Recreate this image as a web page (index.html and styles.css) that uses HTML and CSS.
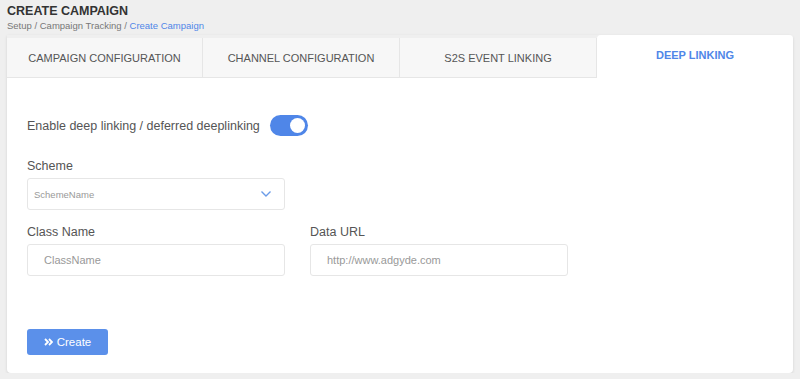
FILE: index.html
```html
<!DOCTYPE html>
<html lang="en">
<head>
  <meta charset="UTF-8" />
  <title>Create Campaign</title>
  <link rel="stylesheet" href="styles.css">
</head>
<body>
  <div class="page">
    <h1 class="title">CREATE CAMPAIGN</h1>
    <div class="crumbs">Setup / Campaign Tracking / <span class="crumb-active">Create Campaign</span></div>

    <div class="card">
      <div class="tabs">
        <div class="tab">CAMPAIGN CONFIGURATION</div>
        <div class="tab">CHANNEL CONFIGURATION</div>
        <div class="tab">S2S EVENT LINKING</div>
        <div class="tab tab-active">DEEP LINKING</div>
      </div>

      <div class="card-body">
        <div class="toggle-row">
          <span class="toggle-label">Enable deep linking / deferred deeplinking</span>
          <span class="switch"><span class="knob"></span></span>
        </div>

        <div class="field">
          <label class="field-label">Scheme</label>
          <div class="select">
            <span class="placeholder placeholder-small">SchemeName</span>
            <svg class="chevron" width="12" height="8" viewBox="0 0 12 8">
              <path d="M1.5 1.5 L6 6 L10.5 1.5" fill="none" stroke="#6a9be8" stroke-width="1.4" />
            </svg>
          </div>
        </div>

        <div class="field-row">
          <div class="field">
            <label class="field-label">Class Name</label>
            <div class="input input-indent"><span class="placeholder">ClassName</span></div>
          </div>
          <div class="field">
            <label class="field-label">Data URL</label>
            <div class="input input-indent"><span class="placeholder">http://www.adgyde.com</span></div>
          </div>
        </div>

        <button class="btn">
          <svg width="9" height="8" viewBox="0 0 9 8">
            <path d="M1 1 L4 4 L1 7 M5 1 L8 4 L5 7" fill="none" stroke="#ffffff" stroke-width="1.8" />
          </svg>
          Create
        </button>
      </div>
    </div>
  </div>
</body>
</html>
```

FILE: styles.css
```css
body {
  margin: 0;
  padding: 0;
  background-color: #efefef;
  color: #555555;
  font-family: "Liberation Sans", Arial, sans-serif;
}

.page {
  padding: 3px 7px 0 7px;
}

.title {
  margin: 0;
  font-size: 12.5px;
  line-height: 16px;
  font-weight: bold;
  color: #333333;
}

.crumbs {
  font-size: 9.5px;
  line-height: 13px;
  color: #777777;
}

.crumb-active {
  color: #4f86e8;
}

.card {
  margin-top: 3px;
  background-color: #ffffff;
  box-shadow: 0 1px 3px rgba(0, 0, 0, 0.12);
  border-radius: 0 4px 4px 4px;
}

.tabs {
  display: grid;
  grid-template-columns: 196px 197px 197px 1fr;
  align-items: end;
  background-color: #efefef;
}

.tab {
  height: 40px;
  line-height: 40px;
  text-align: center;
  font-size: 11px;
  color: #555555;
  background-color: #f7f7f7;
  border-right: 1px solid #e6e6e6;
  border-bottom: 1px solid #e6e6e6;
  box-sizing: border-box;
}

.tab-active {
  height: 43px;
  line-height: 40px;
  background-color: #ffffff;
  color: #4f86e8;
  font-weight: bold;
  border: none;
  border-radius: 4px 4px 0 0;
}

.card-body {
  padding: 37px 20px 18px 20px;
}

.toggle-row {
  display: flex;
  align-items: center;
  gap: 10px;
  height: 21px;
}

.toggle-label {
  font-size: 12.5px;
}

.switch {
  position: relative;
  display: inline-block;
  width: 38px;
  height: 21px;
  border-radius: 11px;
  background-color: #4f86e8;
}

.knob {
  position: absolute;
  top: 3px;
  right: 3px;
  width: 15px;
  height: 15px;
  border-radius: 50%;
  background-color: #ffffff;
}

.field {
  width: 258px;
}

.field-label {
  display: block;
  font-size: 12.5px;
  line-height: 16px;
  margin-top: 22px;
  margin-bottom: 4px;
}

.field-row {
  display: flex;
  gap: 25px;
}

.field-row .field-label {
  margin-top: 14px;
  margin-bottom: 4px;
}

.select,
.input {
  height: 32px;
  box-sizing: border-box;
  border: 1px solid #e6e6e6;
  border-radius: 3px;
  display: flex;
  align-items: center;
  padding: 0 6px;
}

.select {
  justify-content: space-between;
  padding-right: 12px;
}

.input-indent {
  padding-left: 16px;
}

.placeholder {
  font-size: 11px;
  color: #999999;
}

.placeholder-small {
  font-size: 9.5px;
}

.btn {
  margin-top: 53px;
  width: 81px;
  height: 26px;
  border: none;
  border-radius: 3px;
  background-color: #5b90ea;
  color: #ffffff;
  font-family: "Liberation Sans", Arial, sans-serif;
  font-size: 11.5px;
  display: flex;
  align-items: center;
  justify-content: center;
  gap: 4px;
  cursor: pointer;
}
```
